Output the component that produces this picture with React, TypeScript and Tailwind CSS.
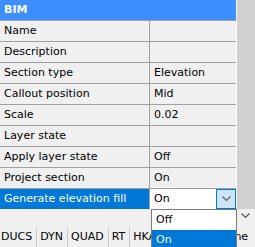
import React from "react";

const rows: [string, string][] = [
  ["Name", ""],
  ["Description", ""],
  ["Section type", "Elevation"],
  ["Callout position", "Mid"],
  ["Scale", "0.02"],
  ["Layer state", ""],
  ["Apply layer state", "Off"],
  ["Project section", "On"],
];

const Chevron = ({ cls }: { cls: string }) => (
  <svg width="9" height="6" viewBox="0 0 9 6" className={cls}>
    <path d="M0.5 0.5 L4.5 4.5 L8.5 0.5" fill="none" stroke="currentColor" strokeWidth="1.2" />
  </svg>
);

export default function App() {
  const status = ["DUCS", "DYN", "QUAD", "RT", "HKA", "LOCKUI"];
  return (
    <div
      className="relative w-[255px] h-[247px] overflow-hidden bg-[#f0f0f0] text-[11px] text-black"
      style={{ fontFamily: '"DejaVu Sans", sans-serif' }}
    >
      <div className="flex h-[209px]">
        <div className="w-[236px] flex flex-col">
          <div className="h-[20px] bg-[#3d8eff] text-white font-bold pl-[4px] flex items-center">BIM</div>
          <div className="h-px bg-[#a0a0a0]" />
          {rows.map(([k, v]) => (
            <div key={k} className="flex flex-col">
              <div className="flex h-[20px]">
                <div className="w-[149px] pl-[4px] flex items-center whitespace-nowrap overflow-hidden">{k}</div>
                <div className="w-px bg-[#a0a0a0]" />
                <div className="flex-1 pl-[4px] flex items-center">{v}</div>
              </div>
              <div className="h-px bg-[#a0a0a0]" />
            </div>
          ))}
          <div className="flex h-[20px]">
            <div className="w-[149px] pl-[4px] flex items-center bg-[#0078d7] text-white whitespace-nowrap overflow-hidden">
              Generate elevation fill
            </div>
            <div className="w-px bg-[#a0a0a0]" />
            <div className="flex-1 flex bg-white">
              <div className="flex-1 pl-[4px] flex items-center">On</div>
              <div className="w-[20px] h-[20px] border border-[#0078d7] bg-[#cce4f7] flex items-center justify-center">
                <Chevron cls="text-[#606060]" />
              </div>
            </div>
          </div>
        </div>
        <div className="w-px bg-white" />
        <div className="flex-1 bg-[#d0d0d0]" />
      </div>

      <div className="h-[15px] flex justify-end pr-[5px] pt-[4px]">
        <Chevron cls="text-[#555]" />
      </div>

      <div className="h-[23px] flex items-center ml-[-2px] pt-[3px] whitespace-nowrap text-[11px]">
        {status.map((s, i) => (
          <React.Fragment key={s}>
            {i > 0 && <div className="w-px h-[21px] bg-[#c8c8c8] shrink-0" />}
            <div className="pl-[3px] pr-[4px] shrink-0">{s}</div>
          </React.Fragment>
        ))}
        <div className="w-px h-[21px] bg-[#c8c8c8] shrink-0" />
        <div className="pl-[10px] pr-[4px] shrink-0">None</div>
      </div>

      <div className="absolute left-[151px] top-[209px] w-[86px] h-[40px] bg-white border border-[#7a7a7a]">
        <div className="h-[20px] pl-[4px] flex items-center">Off</div>
        <div className="h-[20px] pl-[4px] flex items-center bg-[#0078d7] text-white">On</div>
      </div>
    </div>
  );
}
